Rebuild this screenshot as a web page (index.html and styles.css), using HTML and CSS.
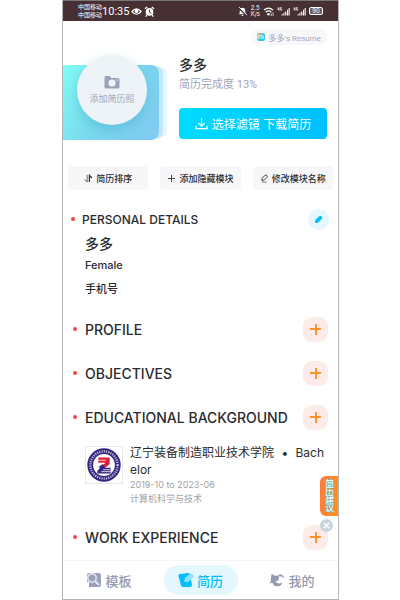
FILE: index.html
```
<!DOCTYPE html>
<html lang="zh-CN">

<head>
    <meta charset="UTF-8">
    <meta name="viewport" content="width=device-width, initial-scale=1.0">
    <title>多多's Resume</title>
    <link rel="stylesheet" href="styles.css">
</head>

<body>
    <div class="phone">
        <div class="status-bar">
            <div class="carrier"><span>中国移动</span><span>中国移动</span></div>
            <span class="time">10:35</span>
            <svg class="status-icon" viewBox="0 0 12 12">
                <path d="M1 6Q6 0 11 6Q6 12 1 6Z" fill="none" stroke="#fff" stroke-width="1.3" />
                <circle cx="6" cy="5.5" r="2.2" fill="#fff" />
            </svg>
            <svg class="status-icon" viewBox="0 0 12 12">
                <circle cx="6" cy="6.5" r="4.2" fill="#fff" />
                <path d="M1 3L3.5 1M11 3L8.5 1M3 10L2 11.5M9 10L10 11.5" stroke="#fff" stroke-width="1.4" />
                <path d="M6 4V7L8 8" fill="none" stroke="#463033" />
            </svg>
            <div class="status-right">
                <svg class="status-icon" viewBox="0 0 12 12">
                    <path d="M2 9H10L9 7.5V5Q9 2 6 2Q3 2 3 5V7.5ZM5 10H7V11H5Z" fill="#fff" />
                    <path d="M1.5 1.5L11 11" stroke="#463033" stroke-width="2" />
                    <path d="M2 1L11 10" stroke="#fff" />
                </svg>
                <div class="speed"><span>2.5</span><span>K/s</span></div>
                <svg class="status-icon" viewBox="0 0 12 12">
                    <path d="M1 4.5Q6 0 11 4.5M3 6.8Q6 4 9 6.8" fill="none" stroke="#fff" stroke-width="1.3" />
                    <circle cx="6" cy="9" r="1.3" fill="#fff" />
                    <path d="M9 8V11M11 7V11" stroke="#fff" stroke-width=".8" />
                </svg>
                <svg class="signal" viewBox="0 0 14 10">
                    <path d="M2 0L.5 2.5H2.5M2 1V4M5 .5H3.8V3.5H5V2" fill="none" stroke="#fff" stroke-width=".8" />
                    <path d="M5.5 9.5V8M7.5 9.5V6.5M9.5 9.5V5M11.5 9.5V3M13.3 9.5V1" stroke="#fff" stroke-width="1.2" />
                </svg>
                <svg class="signal" viewBox="0 0 14 10">
                    <path d="M2 0L.5 2.5H2.5M2 1V4M5 .5H3.8V3.5H5V2" fill="none" stroke="#fff" stroke-width=".8" />
                    <path d="M5.5 9.5V8M7.5 9.5V6.5M9.5 9.5V5M11.5 9.5V3M13.3 9.5V1" stroke="#fff" stroke-width="1.2" />
                </svg>
                <span class="battery">90</span>
            </div>
        </div>

        <main class="content">
            <div class="lang-row">
                <button class="lang-btn" type="button"><span class="lang-mark">EN</span>多多's Resume</button>
            </div>

            <section class="hero">
                <div class="photo-card">
                    <button class="photo-btn" type="button">
                        <svg class="camera" viewBox="0 0 16 14">
                            <path d="M1 1H6L7 3H14Q15.5 3 15.5 4.5V12Q15.5 13.5 14 13.5H2Q.5 13.5 .5 12V2Z" fill="#9ca3b9" />
                            <circle cx="8" cy="8" r="3.6" fill="#eef3f7" />
                            <circle cx="13" cy="5" r=".8" fill="#eef3f7" />
                        </svg>
                        添加简历照
                    </button>
                </div>
                <div class="summary">
                    <h1>多多</h1>
                    <p>简历完成度 13%</p>
                    <button class="download" type="button">
                        <svg class="download-icon" viewBox="0 0 14 12" fill="none" stroke="#fff" stroke-width="1.3">
                            <path d="M7 0V8M3.5 5L7 8.3L10.5 5M1 8V11H13V8" />
                        </svg>
                        选择滤镜 下载简历
                    </button>
                </div>
            </section>

            <div class="tools">
                <button class="tool" type="button">
                    <svg viewBox="0 0 10 10" fill="none" stroke="#333">
                        <path d="M3.5 1V9L.8 6" stroke-width=".8" />
                        <path d="M6 9V1.5L8.8 4.5" stroke-width="1.4" />
                    </svg>简历排序
                </button>
                <button class="tool" type="button">
                    <svg viewBox="0 0 10 10" stroke="#333">
                        <path d="M5 1V9M1 5H9" />
                    </svg>添加隐藏模块
                </button>
                <button class="tool" type="button">
                    <svg viewBox="0 0 10 10" fill="none" stroke="#333">
                        <path d="M2 7L2.5 4.5L5.5 1.5Q7 .5 8 2Q8.5 3 7.5 4L4.5 7Z" />
                        <path d="M2 9H7.5" stroke-width=".7" />
                    </svg>修改模块名称
                </button>
            </div>

            <section class="personal">
                <div class="row row-small">
                    <h2>PERSONAL DETAILS</h2>
                    <button class="edit" type="button" aria-label="编辑">
                        <svg viewBox="0 0 10 10">
                            <path d="M1 9L1.5 5.5L5.5 1.5Q7 .5 8.5 1.5Q9.7 3 8.5 4.5L4.5 8.5Z" fill="#00bfff" />
                        </svg>
                    </button>
                </div>
                <div class="details">
                    <p class="name">多多</p>
                    <p class="gender">Female</p>
                    <p class="mobile">手机号</p>
                </div>
            </section>

            <section class="row">
                <h2>PROFILE</h2>
                <button class="add" type="button" aria-label="添加"></button>
            </section>
            <section class="row">
                <h2>OBJECTIVES</h2>
                <button class="add" type="button" aria-label="添加"></button>
            </section>
            <section>
                <div class="row">
                    <h2>EDUCATIONAL BACKGROUND</h2>
                    <button class="add" type="button" aria-label="添加"></button>
                </div>
                <div class="school">
                    <svg class="school-logo" viewBox="0 0 38 38">
                        <circle cx="19" cy="19" r="17.6" fill="#352681" />
                        <circle cx="19" cy="19" r="14.4" fill="none" stroke="#c8c3df" stroke-width="2.4" stroke-dasharray="1.2 1.2" />
                        <circle cx="19" cy="19" r="11.5" fill="#fff" />
                        <path d="M13 11H25V18L19 23L17 20L20 17H13Z" fill="#e21d36" />
                        <path d="M13 21L18 18L20 22H26V28H12V25L15 22Z" fill="#352681" />
                        <path d="M12 14H21M13 17H20M18 24H26M16 26H26" stroke="#fff" stroke-width=".8" />
                    </svg>
                    <div class="school-info">
                        <h3>辽宁装备制造职业技术学院 <span class="sep">•</span> Bachelor</h3>
                        <p>2019-10 to 2023-06</p>
                        <p>计算机科学与技术</p>
                    </div>
                </div>
            </section>
            <section class="row">
                <h2>WORK EXPERIENCE</h2>
                <button class="add" type="button" aria-label="添加"></button>
            </section>
        </main>

        <nav class="tab-bar">
            <a class="tab" href="#templates">
                <svg viewBox="0 0 16 16">
                    <path d="M3 1H13Q15 1 15 3V13Q15 15 13 15H3V10H1V3Q1 1 3 1Z" fill="#9aa2ba" />
                    <circle cx="6" cy="6" r="4.2" fill="#9aa2ba" stroke="#e6e9f1" stroke-width="1.4" />
                    <path d="M9 9L13 13" stroke="#e6e9f1" stroke-width="2" />
                </svg>模板
            </a>
            <a class="tab active" href="#resume">
                <svg viewBox="0 0 16 16">
                    <path d="M2 2L10 1Q12 1 12 3L14 13Q14 15 12 15H5Q3 15 3 13L.5 4Q0 2.5 2 2Z" fill="#00bfff" />
                    <path d="M6 10L7 6L12 1.5Q14 1 15.5 3.5Q16 5 15 6L10 10Z" fill="#91e2fb" />
                </svg>简历
            </a>
            <a class="tab" href="#mine">
                <svg viewBox="0 0 18 16">
                    <path d="M3 1L6 3Q9 4 11 2V7Q10 10 7 10Q10 13 15 11Q14 15 9 15Q5 15 4 11L0 12Q3 10 2 7Z" fill="#9299b1" />
                    <path d="M11 2Q16 1 17 6Q14 3 11 4Z" fill="#9299b1" />
                </svg>我的
            </a>
        </nav>

        <div class="advice">
            <button class="advice-btn" type="button">简历建议</button>
            <button class="advice-close" type="button" aria-label="关闭">
                <svg viewBox="0 0 12 12" stroke="#fff" stroke-width="1.4">
                    <path d="M3.5 3.5L8.5 8.5M8.5 3.5L3.5 8.5" />
                </svg>
            </button>
        </div>
    </div>
</body>

</html>
```
FILE: styles.css
```
* {
    box-sizing: border-box;
}

body {
    margin: 0;
    background: #fff;
    color: #2b2b2d;
    font-family: "Inter", "Noto Sans CJK SC", sans-serif;
}

h1,
h2,
h3,
p {
    margin: 0;
}

button {
    border: none;
    padding: 0;
    font-family: inherit;
    color: inherit;
    cursor: pointer;
}

.phone {
    position: relative;
    display: flex;
    flex-direction: column;
    min-height: 100vh;
    margin: 0 61px 0 62px;
    border: 1px solid #b5b5b5;
    border-top: none;
}

.status-bar {
    display: flex;
    align-items: center;
    gap: 2px;
    height: 21px;
    padding: 0 15px;
    background: #463033;
    border-top: 1px solid #777;
    color: #fff;
    white-space: nowrap;
}

.carrier,
.speed {
    display: flex;
    flex-direction: column;
    font-size: 6px;
    line-height: 8px;
}

.carrier {
    margin-right: -2px;
}

.speed {
    line-height: 6px;
}

.time {
    font-family: Roboto, sans-serif;
    font-size: 11px;
}

.status-icon {
    width: 11px;
    height: 11px;
}

.status-right {
    display: flex;
    align-items: center;
    gap: 3px;
    margin-left: auto;
}

.signal {
    width: 13px;
    height: 9px;
}

.battery {
    width: 14px;
    border: 1px solid #fff;
    border-radius: 2px;
    background: #6d5c5f;
    font-size: 6px;
    line-height: 6px;
    text-align: center;
}

.content {
    flex: 1;
}

.lang-row {
    display: flex;
    justify-content: flex-end;
    padding: 8px 11px 0 0;
}

.lang-btn {
    display: flex;
    align-items: center;
    gap: 4px;
    height: 16px;
    padding: 0 6px;
    border-radius: 8px;
    background: #f8f8fa;
    color: #a3a9bd;
    font-family: Roboto, "Noto Sans CJK SC", sans-serif;
    font-size: 8px;
}

.lang-mark {
    width: 8px;
    border-radius: 2px;
    background: linear-gradient(135deg, #ffb347, #2fc4e8 60%);
    color: #fff;
    font-size: 5px;
    line-height: 8px;
    text-align: center;
}

.hero {
    display: flex;
    gap: 20px;
    padding: 10px 11px 0 0;
}

.photo-card {
    width: 96px;
    height: 75px;
    margin-top: 10px;
    border-radius: 0 8px 8px 0;
    background: linear-gradient(120deg, #82fcf5 0%, #79d8ee 50%, #83caf3 100%);
    box-shadow: 5px 0 0 -1px #c2e9f9, 11px 0 0 -3px #e6f6fc;
}

.photo-btn {
    display: flex;
    flex-direction: column;
    align-items: center;
    justify-content: center;
    gap: 3px;
    width: 70px;
    height: 70px;
    margin: -10px 0 0 14px;
    border-radius: 50%;
    background: #eef3f7;
    box-shadow: 0 6px 12px #50b4cd80;
    color: #a0a6ba;
    font-size: 9px;
    line-height: 14px;
}

.camera {
    width: 16px;
    height: 14px;
}

.summary {
    flex: 1;
}

.summary h1 {
    font-size: 14px;
    font-weight: 500;
    line-height: 20px;
}

.summary p {
    color: #9da5bb;
    font-family: Roboto, "Noto Sans CJK SC", sans-serif;
    font-size: 11px;
    line-height: 20px;
}

.download {
    display: flex;
    align-items: center;
    justify-content: center;
    gap: 4px;
    width: 100%;
    height: 31px;
    margin-top: 13px;
    border-radius: 4px;
    background: linear-gradient(90deg, #00dcff, #00c0ff);
    color: #fff;
    font-size: 12px;
    white-space: nowrap;
}

.download-icon {
    width: 13px;
    height: 12px;
}

.tools {
    display: flex;
    gap: 12px;
    padding: 26px 5px 17px;
}

.tool {
    display: flex;
    flex: 1;
    align-items: center;
    justify-content: center;
    gap: 3px;
    height: 24px;
    border-radius: 4px;
    background: #f7f7f9;
    font-size: 9px;
    font-weight: 500;
    white-space: nowrap;
}

.tool svg {
    width: 9px;
    height: 9px;
}

.row {
    display: flex;
    align-items: center;
    height: 44px;
    padding: 0 10px;
}

.row h2 {
    display: flex;
    flex: 1;
    align-items: center;
    gap: 8px;
    font-size: 14px;
    font-weight: 500;
    white-space: nowrap;
}

.row h2::before {
    content: "";
    width: 4px;
    height: 4px;
    border-radius: 50%;
    background: #fb4340;
}

.row-small {
    height: 24px;
    padding: 0 9px 0 8px;
}

.row-small h2 {
    gap: 7px;
    font-size: 12px;
}

.edit {
    display: flex;
    align-items: center;
    justify-content: center;
    width: 21px;
    height: 21px;
    border-radius: 50%;
    background: #e4f6fe;
}

.edit svg {
    width: 9px;
    height: 9px;
}

.add {
    width: 25px;
    height: 25px;
    border-radius: 9px;
    background:
        linear-gradient(#ff942f, #ff942f) center / 11px 2px no-repeat,
        linear-gradient(#ff942f, #ff942f) center / 2px 11px no-repeat,
        #fdebea;
}

.details {
    padding: 4px 0 6px 22px;
    font-weight: 500;
}

.name {
    font-size: 14px;
    line-height: 18px;
}

.gender,
.mobile {
    font-size: 11px;
    line-height: 24px;
}

.school {
    display: flex;
    gap: 7px;
    padding: 5px 11px 9px 22px;
}

.school-logo {
    flex: none;
    width: 38px;
    height: 38px;
    margin-top: 2px;
    border: 1px solid #e7e7e7;
}

.school-info {
    flex: 1;
}

.school-info h3 {
    font-size: 12px;
    font-weight: 400;
    line-height: 17px;
    word-break: break-all;
}

.sep {
    padding: 0 4px;
}

.school-info p {
    color: #a2a2a4;
    font-size: 9px;
    line-height: 14px;
}

.tab-bar {
    display: flex;
    align-items: center;
    justify-content: space-between;
    height: 39px;
    padding: 0 9px;
    border-top: 1px solid #f5f5f7;
    background: #fff;
}

.tab {
    display: flex;
    align-items: center;
    justify-content: center;
    gap: 3px;
    width: 74px;
    height: 30px;
    border-radius: 15px;
    color: #9299af;
    font-size: 13px;
    font-weight: 500;
    text-decoration: none;
}

.tab svg {
    width: 16px;
    height: 16px;
}

.tab.active {
    background: #e4f6fe;
    color: #00bfff;
}

.advice {
    position: absolute;
    right: 0;
    bottom: 67px;
    display: flex;
    flex-direction: column;
    gap: 3px;
}

.advice-btn {
    width: 18px;
    padding: 4px 4px 4px 5px;
    border-radius: 6px 0 0 6px;
    background: linear-gradient(100deg, #ff7a3c, #ff9420);
    color: #fff;
    font-size: 9px;
    font-weight: 500;
    line-height: 8px;
    text-shadow: 0 0 1px #10b9c9, 0 0 1px #10b9c9;
    word-break: break-all;
}

.advice-close {
    width: 13px;
    height: 13px;
    border-radius: 50%;
    background: #c8d3df;
}

.advice-close svg {
    display: block;
    width: 13px;
    height: 13px;
}
```
